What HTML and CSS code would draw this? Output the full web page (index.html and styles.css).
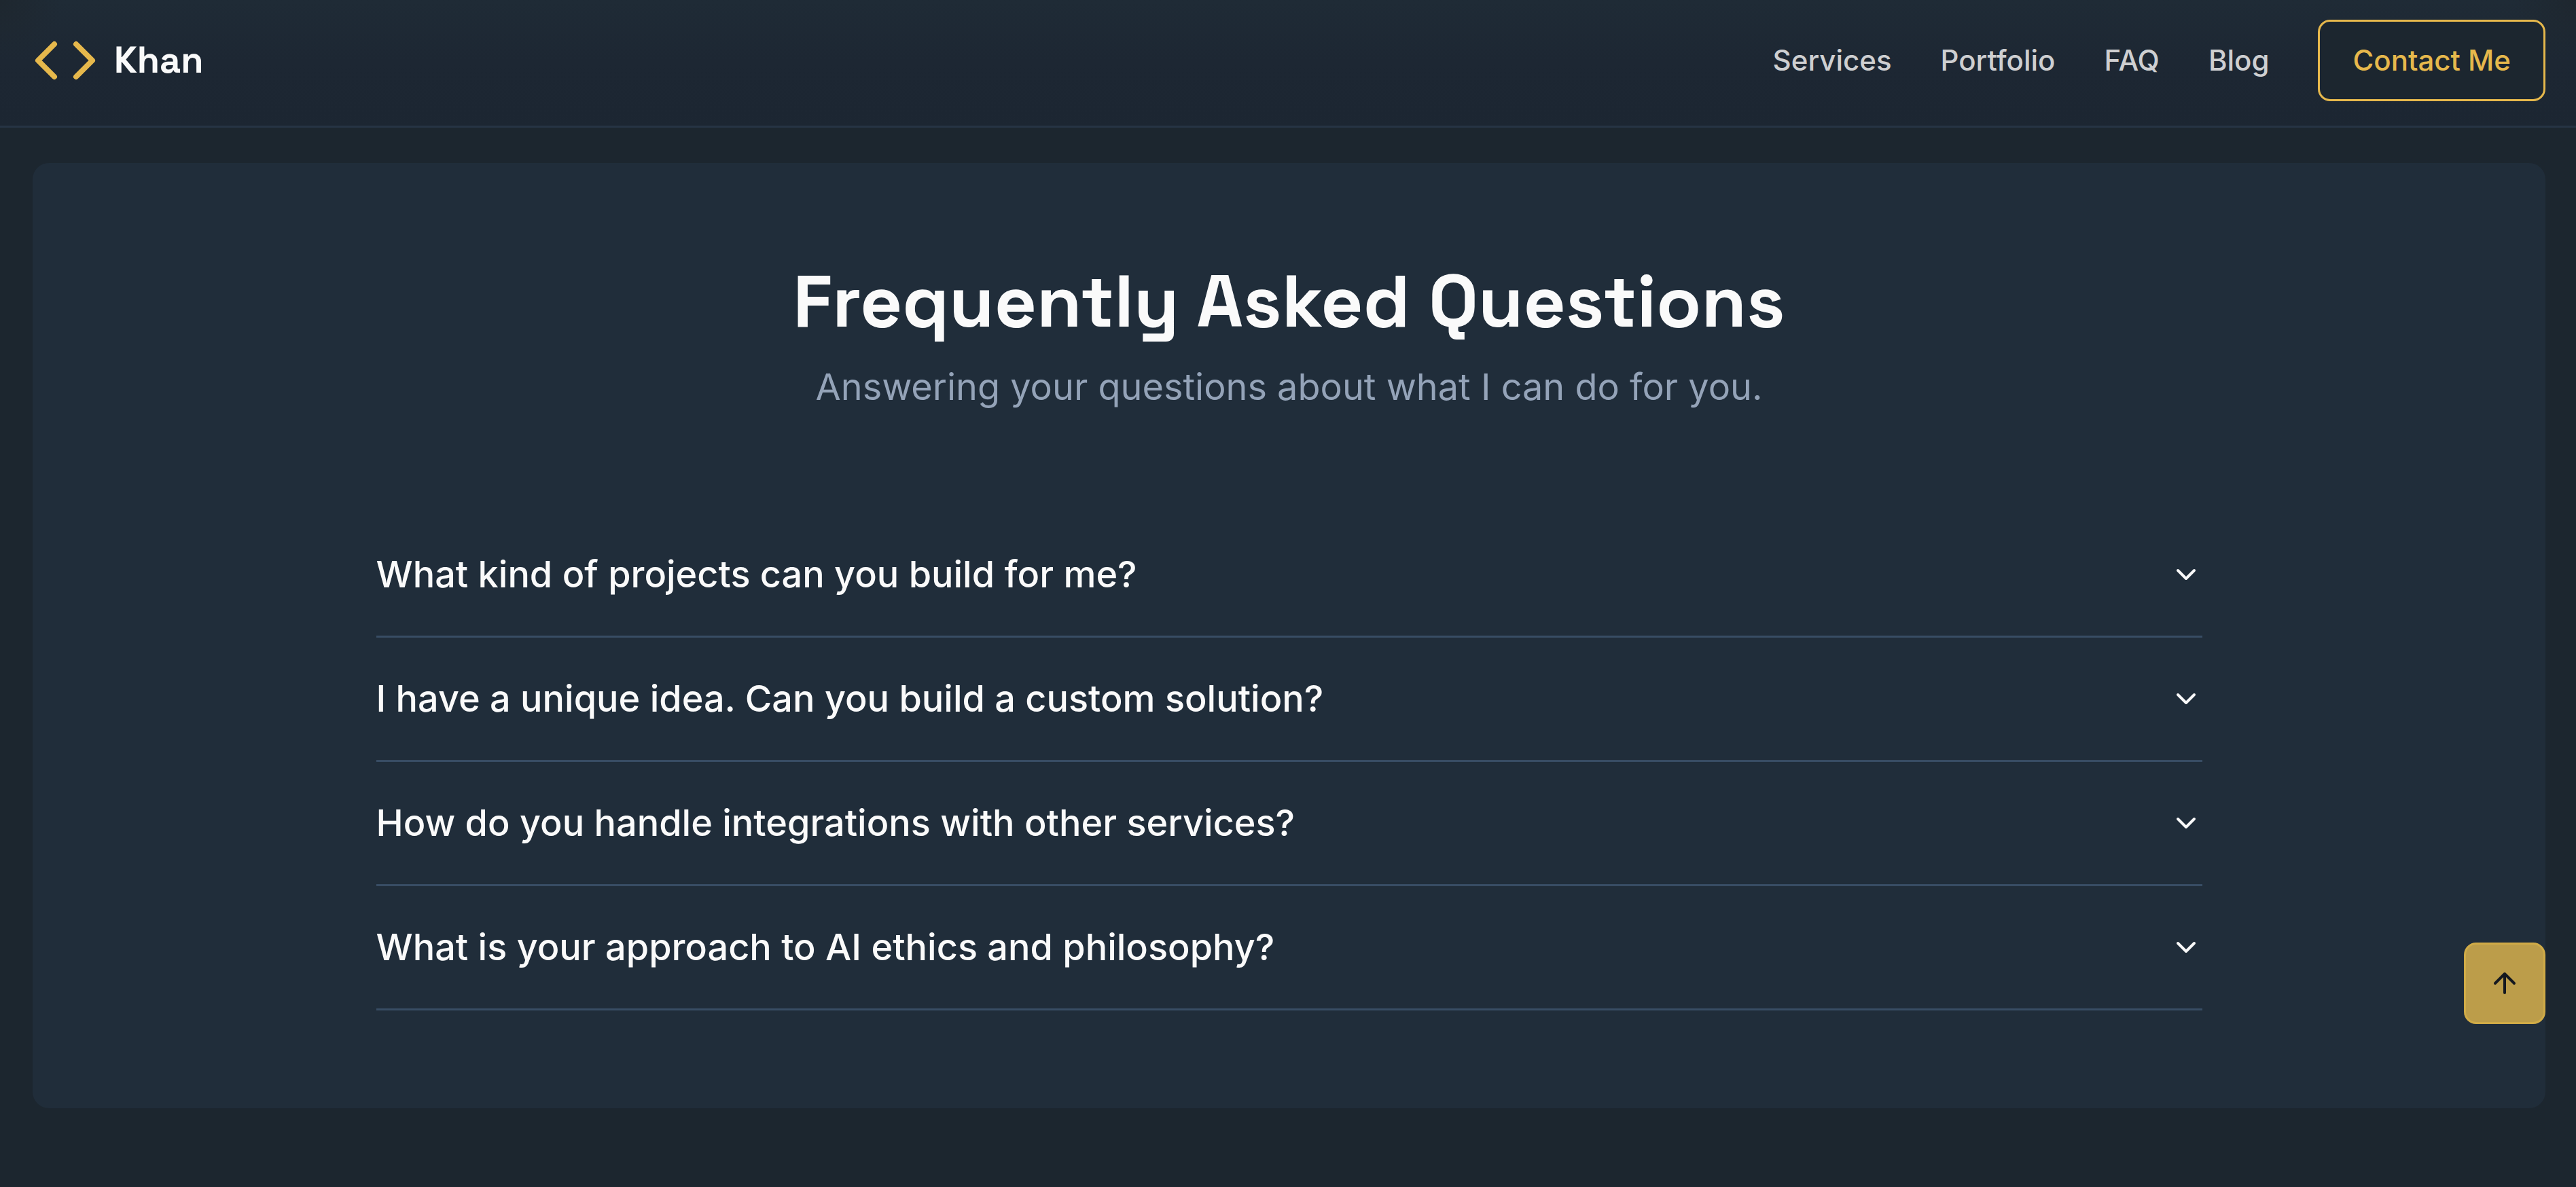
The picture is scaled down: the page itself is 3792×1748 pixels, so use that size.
FILE: index.html
```html
<!DOCTYPE html>
<html lang="en">
<head>
  <meta charset="utf-8">
  <meta name="viewport" content="width=device-width, initial-scale=1">
  <title>Khan - FAQ</title>
  <link rel="stylesheet" href="styles.css">
</head>
<body>
  <header class="site-header">
    <a class="brand" href="#">
      <svg class="brand-mark" viewBox="0 0 24 24" aria-hidden="true"><path d="m16 18 6-6-6-6M8 6l-6 6 6 6"/></svg>
      <span class="brand-name">Khan</span>
    </a>
    <nav class="site-nav">
      <a class="nav-link" href="#services">Services</a>
      <a class="nav-link" href="#portfolio">Portfolio</a>
      <a class="nav-link" href="#faq">FAQ</a>
      <a class="nav-link" href="#blog">Blog</a>
      <button class="contact-button" type="button">Contact Me</button>
    </nav>
  </header>

  <main class="page">
    <section class="faq" id="faq">
      <div class="faq-intro">
        <h2 class="faq-title">Frequently Asked Questions</h2>
        <p class="faq-subtitle">Answering your questions about what I can do for you.</p>
      </div>
      <div class="faq-list">
        <h3 class="faq-item"><button class="faq-question" type="button" aria-expanded="false">What kind of projects can you build for me?<svg class="icon" viewBox="0 0 24 24" aria-hidden="true"><path d="m6 9 6 6 6-6"/></svg></button></h3>
        <h3 class="faq-item"><button class="faq-question" type="button" aria-expanded="false">I have a unique idea. Can you build a custom solution?<svg class="icon" viewBox="0 0 24 24" aria-hidden="true"><path d="m6 9 6 6 6-6"/></svg></button></h3>
        <h3 class="faq-item"><button class="faq-question" type="button" aria-expanded="false">How do you handle integrations with other services?<svg class="icon" viewBox="0 0 24 24" aria-hidden="true"><path d="m6 9 6 6 6-6"/></svg></button></h3>
        <h3 class="faq-item"><button class="faq-question" type="button" aria-expanded="false">What is your approach to AI ethics and philosophy?<svg class="icon" viewBox="0 0 24 24" aria-hidden="true"><path d="m6 9 6 6 6-6"/></svg></button></h3>
      </div>
    </section>
  </main>

  <button class="to-top" type="button" aria-label="Back to top"><svg class="icon" viewBox="0 0 24 24" aria-hidden="true"><path d="m5 12 7-7 7 7M12 19V5"/></svg></button>
</body>
</html>
```
FILE: styles.css
```css
:root {
  --background: #1c262f;
  --card: #202d3a;
  --foreground: #fafafa;
  --muted: #94a3b8;
  --gold: #e6b84c;
}

* { box-sizing: border-box; }

body {
  margin: 0;
  background: var(--background);
  color: var(--foreground);
  font-family: Inter, "Liberation Sans", sans-serif;
}

button {
  font: inherit;
  color: inherit;
  cursor: pointer;
}

svg {
  flex: none;
  fill: none;
  stroke: currentColor;
  stroke-width: 2;
  stroke-linecap: round;
  stroke-linejoin: round;
}

.icon {
  width: 48px;
  height: 48px;
}

.site-header {
  display: flex;
  align-items: center;
  justify-content: space-between;
  padding: 29px 45px 36px 48px;
  border-bottom: 3px solid #263444;
  background:
    radial-gradient(circle at top left, #1e272f, transparent 90px),
    radial-gradient(circle at top right, #1e272f, transparent 90px),
    linear-gradient(#1f2b36, #1d2733 50%, #1c2632);
}

.brand {
  display: flex;
  align-items: center;
  gap: 24px;
  color: inherit;
  text-decoration: none;
}

.brand-mark {
  width: 96px;
  height: 96px;
  color: var(--gold);
}

.brand-name {
  font-family: "Space Grotesk", Inter, sans-serif;
  font-size: 54px;
  font-weight: 700;
  line-height: 84px;
}

.site-nav {
  display: flex;
  align-items: center;
  gap: 72px;
  font-size: 42px;
  font-weight: 500;
  line-height: 60px;
}

.nav-link {
  color: #cecfd1;
  text-decoration: none;
}

.contact-button {
  height: 120px;
  padding: 0 48px;
  border: 3px solid var(--gold);
  border-radius: 18px;
  background: var(--background);
  color: var(--gold);
}

.page { padding: 52px 45px 116px 48px; }

.faq {
  padding: 144px 72px;
  border-radius: 24px;
  background: var(--card);
}

.faq-intro {
  margin-bottom: 144px;
  text-align: center;
}

.faq-title {
  margin: 0;
  font-family: "Space Grotesk", Inter, sans-serif;
  font-size: 108px;
  font-weight: 700;
  line-height: 120px;
}

.faq-subtitle {
  margin: 24px 0 0;
  color: var(--muted);
  font-size: 54px;
  line-height: 84px;
}

.faq-list {
  max-width: 2688px;
  margin: 0 auto;
}

.faq-item {
  margin: 0;
  border-bottom: 3px solid #384d64;
}

.faq-question {
  display: flex;
  align-items: center;
  justify-content: space-between;
  width: 100%;
  padding: 48px 0;
  border: 0;
  background: none;
  font-size: 54px;
  font-weight: 500;
  line-height: 84px;
  text-align: left;
}

.to-top {
  position: fixed;
  right: 45px;
  bottom: 240px;
  display: flex;
  align-items: center;
  justify-content: center;
  width: 120px;
  height: 120px;
  padding: 0;
  border: 3px solid #d0ab47;
  border-radius: 18px;
  background: #bc9d4a;
  color: #14181f;
}
```
